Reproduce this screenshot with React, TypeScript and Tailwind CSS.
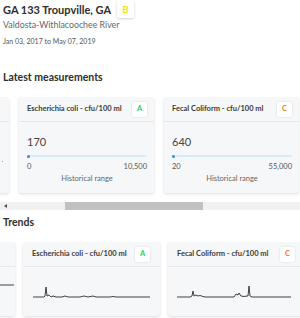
import React from "react";

function Badge({ letter, color, big }: { letter: string; color: string; big?: boolean }) {
  return (
    <div
      className={
        big
          ? "w-[17px] h-[18px] bg-white rounded-[2px] shadow-[0_1px_3px_rgba(0,0,0,0.18)] flex items-center justify-center text-[10px] font-bold leading-none"
          : "w-[15px] h-[15px] bg-white rounded-[2px] shadow-[0_0_2px_rgba(0,0,0,0.15)] flex items-center justify-center text-[7.5px] font-bold leading-none"
      }
      style={{ color }}
    >
      {letter}
    </div>
  );
}

function MeasureCard({
  title,
  letter,
  color,
  value,
  min,
  max,
}: {
  title: string;
  letter: string;
  color: string;
  value: string;
  min: string;
  max: string;
}) {
  return (
    <div className="w-[135px] h-[96px] shrink-0 bg-[#f6f7f9] rounded-[3px] shadow-[0_1px_3px_rgba(0,0,0,0.14)] flex flex-col">
      <div className="h-[25px] pl-[8px] pr-[7px] flex items-center justify-between border-b border-[#e6e7ea]">
        <span className="text-[7.5px] font-bold text-[#3a3a3a] leading-none">{title}</span>
        <Badge letter={letter} color={color} />
      </div>
      <div className="px-[8px] pr-[7px] flex flex-col">
        <div className="mt-[14px] text-[11px] leading-[12px] text-[#444]">{value}</div>
        <div className="mt-[7px] relative h-[2px] bg-[#d6ecfb] rounded-full">
          <div className="absolute left-0 top-[-0.5px] w-[3px] h-[3px] rounded-full bg-[#2a8fe0]" />
        </div>
        <div className="mt-[5px] flex justify-between text-[7.5px] leading-[9px] text-[#555]">
          <span>{min}</span>
          <span>{max}</span>
        </div>
        <div className="mt-[3px] text-center text-[7.5px] leading-[9px] text-[#666]">Historical range</div>
      </div>
    </div>
  );
}

function TrendCard({
  title,
  letter,
  color,
  path,
}: {
  title: string;
  letter: string;
  color: string;
  path: string;
}) {
  return (
    <div className="w-[137px] h-[74px] shrink-0 bg-[#f6f7f9] rounded-[3px] shadow-[0_1px_3px_rgba(0,0,0,0.14)] flex flex-col">
      <div className="h-[25px] pl-[9px] pr-[10px] flex items-center justify-between border-b border-[#e6e7ea]">
        <span className="text-[7.5px] font-bold text-[#3a3a3a] leading-none">{title}</span>
        <Badge letter={letter} color={color} />
      </div>
      <svg width="137" height="40" viewBox="0 0 137 40" className="block">
        <path d={path} fill="none" stroke="#2b2b2b" strokeWidth="0.9" strokeLinejoin="round" />
      </svg>
    </div>
  );
}

export default function App() {
  const ecoli =
    "M10 30 L21 30 L22 29 L23 20 L24 29 L26 28 L28 30 L30 29 L33 30 L39 30 L42 29 L45 30 L57 30 L61 29 L65 30 L70 29 L73 30 L87 30 L90 29.5 L93 30 L127 30";
  const fecal =
    "M9 30 L22 30 L24 29 L25 24 L26 29 L28 28 L30 29 L32 28.5 L35 29.5 L37 30 L66 30 L68 27 L70 28 L71 26 L73 29 L76 29.5 L79 29 L80 29 L81 19 L82 29 L84 30 L123 30";

  return (
    <div className="w-[300px] h-[318px] overflow-hidden bg-white font-[Lato,sans-serif] text-[#333]">
      <div className="px-[3px]">
        <div className="flex items-center h-[18px]">
          <h1 className="text-[11px] font-bold leading-none text-[#2e2e2e]">GA 133 Troupville, GA</h1>
          <div className="ml-[6px]">
            <Badge letter="B" color="#f2e800" big />
          </div>
        </div>
        <div className="mt-[2px] text-[8.8px] leading-[10px] text-[#666]">Valdosta-Withlacoochee River</div>
        <div className="mt-[6px] text-[7px] leading-[10px] text-[#555]">Jan 03, 2017 to May 07, 2019</div>
        <h2 className="mt-[25px] text-[10.5px] font-bold leading-[12px] text-[#2e2e2e]">Latest measurements</h2>
      </div>

      <div className="mt-[14px] overflow-hidden pb-[9px]">
        <div className="flex gap-[10px] ml-[-126px]">
          <div className="w-[135px] h-[96px] shrink-0 bg-[#f6f7f9] rounded-[3px] shadow-[0_1px_3px_rgba(0,0,0,0.14)] flex flex-col">
            <div className="h-[25px] border-b border-[#e6e7ea]" />
            <div className="mt-[39px] ml-[128px] w-[1px] h-[1px] bg-[#999]" />
          </div>
          <MeasureCard
            title="Escherichia coli - cfu/100 ml"
            letter="A"
            color="#1fd163"
            value="170"
            min="0"
            max="10,500"
          />
          <MeasureCard
            title="Fecal Coliform - cfu/100 ml"
            letter="C"
            color="#f47a1f"
            value="640"
            min="20"
            max="55,000"
          />
        </div>
      </div>

      <div className="h-[8px] bg-[#f1f1f1] flex items-center">
        <div className="w-[10px] h-[8px] flex items-center justify-center">
          <div className="w-0 h-0 border-y-[2.5px] border-y-transparent border-r-[3px] border-r-[#505050]" />
        </div>
        <div className="ml-[55px] w-[138px] h-[8px] bg-[#c1c1c1]" />
      </div>

      <div className="px-[3px]">
        <h2 className="mt-[6px] text-[10.5px] font-bold leading-[12px] text-[#2e2e2e]">Trends</h2>
      </div>

      <div className="mt-[14px] overflow-hidden pb-[4px]">
        <div className="flex gap-[8px] ml-[-122px]">
          <div className="w-[137px] h-[74px] shrink-0 bg-[#f6f7f9] rounded-[3px] shadow-[0_1px_3px_rgba(0,0,0,0.14)] flex flex-col">
            <div className="h-[25px] border-b border-[#e6e7ea]" />
            <svg width="137" height="40" viewBox="0 0 137 40" className="block">
              <path d="M100 18 L136 18" fill="none" stroke="#2b2b2b" strokeWidth="0.9" />
            </svg>
          </div>
          <TrendCard title="Escherichia coli - cfu/100 ml" letter="A" color="#1fd163" path={ecoli} />
          <TrendCard title="Fecal Coliform - cfu/100 ml" letter="C" color="#f47a1f" path={fecal} />
        </div>
      </div>
    </div>
  );
}
